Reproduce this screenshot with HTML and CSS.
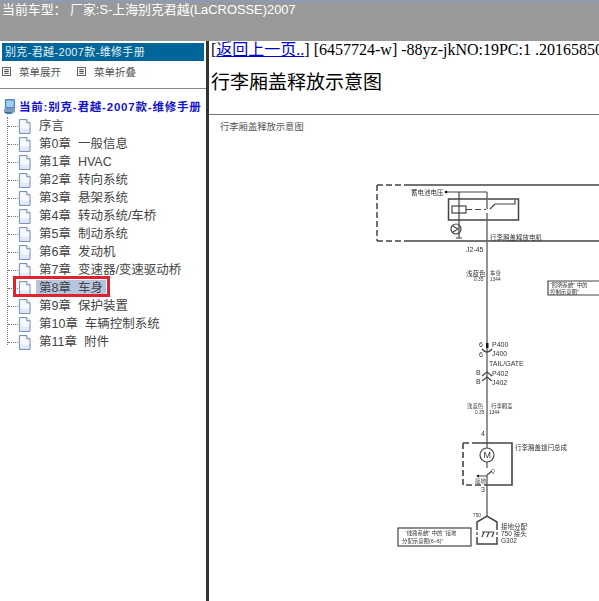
FILE: index.html
```html
<!DOCTYPE html>
<html lang="zh-CN">
<head>
    <meta charset="UTF-8">
    <meta name="viewport" content="width=device-width, initial-scale=1.0">
    <title>行李厢盖释放示意图</title>
    <link rel="stylesheet" href="styles.css">
</head>
<body>
    <svg class="defs" width="0" height="0">
        <symbol id="page" viewBox="0 0 14 16">
            <path d="M1.500 .5h8l3.500 3.500v11.500h-11.500z" fill="#dfe9f7" stroke="#6f86a8"/>
            <path d="M2.500 1.500h6v3h3.500v5c-3 2-6 1-9.500 0z" fill="#f6f9fd"/>
            <path d="M9.500 .5v3.500h3.500" fill="#fff" stroke="#6f86a8"/>
        </symbol>
        <symbol id="menu" viewBox="0 0 10 10">
            <rect x=".5" y=".5" width="9" height="9" fill="#fff" stroke="#555"/>
            <path d="M2.500 3h5M2.500 5h5M2.500 7h5" stroke="#333"/>
        </symbol>
    </svg>

    <header class="topbar">当前车型： 厂家:S-上海别克君越(LaCROSSE)2007</header>

    <div class="frames">
        <nav class="sidebar">
            <div class="side-title">别克-君越-2007款-维修手册</div>
            <div class="side-menu">
                <span class="side-btn"><svg class="menu-icon"><use href="#menu"/></svg>菜单展开</span>
                <span class="side-btn"><svg class="menu-icon"><use href="#menu"/></svg>菜单折叠</span>
            </div>
            <div class="tree-root">
                <svg class="root-icon" viewBox="0 0 14 16">
                    <rect x="2" y="0" width="11" height="11" rx="1.500" fill="#4f86c6"/>
                    <rect x="3.500" y="1.500" width="8" height="7" fill="#a9cdf0"/>
                    <path d="M1 11l3-1h7l2 1v3l-4 2H4l-3-2z" fill="#7f9dbf"/>
                    <path d="M1 14l3 2h5v-2z" fill="#3f6fa6"/>
                </svg>
                当前:别克-君越-2007款-维修手册
            </div>
            <ul class="tree">
                <li class="tree-row"><svg class="page-icon"><use href="#page"/></svg><span class="tree-label">序言</span></li>
                <li class="tree-row"><svg class="page-icon"><use href="#page"/></svg><span class="tree-label">第0章&nbsp;&nbsp;一般信息</span></li>
                <li class="tree-row"><svg class="page-icon"><use href="#page"/></svg><span class="tree-label">第1章&nbsp;&nbsp;HVAC</span></li>
                <li class="tree-row"><svg class="page-icon"><use href="#page"/></svg><span class="tree-label">第2章&nbsp;&nbsp;转向系统</span></li>
                <li class="tree-row"><svg class="page-icon"><use href="#page"/></svg><span class="tree-label">第3章&nbsp;&nbsp;悬架系统</span></li>
                <li class="tree-row"><svg class="page-icon"><use href="#page"/></svg><span class="tree-label">第4章&nbsp;&nbsp;转动系统/车桥</span></li>
                <li class="tree-row"><svg class="page-icon"><use href="#page"/></svg><span class="tree-label">第5章&nbsp;&nbsp;制动系统</span></li>
                <li class="tree-row"><svg class="page-icon"><use href="#page"/></svg><span class="tree-label">第6章&nbsp;&nbsp;发动机</span></li>
                <li class="tree-row"><svg class="page-icon"><use href="#page"/></svg><span class="tree-label">第7章&nbsp;&nbsp;变速器/变速驱动桥</span></li>
                <li class="tree-row current"><svg class="page-icon"><use href="#page"/></svg><span class="tree-label">第8章&nbsp;&nbsp;车身</span><span class="red-box"></span></li>
                <li class="tree-row"><svg class="page-icon"><use href="#page"/></svg><span class="tree-label">第9章&nbsp;&nbsp;保护装置</span></li>
                <li class="tree-row"><svg class="page-icon"><use href="#page"/></svg><span class="tree-label">第10章&nbsp;&nbsp;车辆控制系统</span></li>
                <li class="tree-row"><svg class="page-icon"><use href="#page"/></svg><span class="tree-label">第11章&nbsp;&nbsp;附件</span></li>
            </ul>
        </nav>

        <main class="content">
            <div class="crumb">[<a href="#">返回上一页..</a>] [6457724-w] -88yz-jkNO:19PC:1 .20165850</div>
            <h1 class="doc-title">行李厢盖释放示意图</h1>
            <div class="figure">
                <div class="figure-title">行李厢盖释放示意图</div>
                <svg class="diagram" viewBox="209 145 390 456">
                    <g fill="none" stroke="#444" stroke-width="1.200">
                        <!-- upper module -->
                        <path d="M377 185h27M377 241h27M377 185v56" stroke-dasharray="6 3" stroke-width="1.500"/>
                        <path d="M404 185h195M404 241h195" stroke-width="1.700"/>
                        <path d="M447 192h40M459 192v46"/>
                        <rect x="448.500" y="199" width="70" height="21" stroke-width="1.500"/>
                        <rect x="452" y="206" width="14" height="7"/>
                        <path d="M466 209.500h20" stroke-dasharray="6 3"/>
                        <path d="M490 209l5-5h20v-4"/>
                        <circle cx="456" cy="229" r="5"/>
                        <path d="M453 226l5 3-5 3M456 238h6"/>
                        <!-- main wire -->
                        <path d="M487 192v17M487 213v235M487 462v6M487 475v41" stroke="#666" stroke-width="1.400"/>
                        <path d="M482 349q5 6 10 0" stroke-width="1.500"/>
                        <path d="M482 376l5-4 5 4M482 381l5-4 5 4"/>
                        <!-- lock -->
                        <path d="M475 443h37v42h-22" stroke-width="1.600"/>
                        <path d="M463 443h12M463 443v42h27" stroke-dasharray="6 3" stroke-width="1.600"/>
                        <circle cx="487" cy="455" r="7"/>
                        <path d="M487 475l5-4M478 476h9"/>
                        <!-- ground splice -->
                        <path d="M477 530v-8l10-6 10 6v8M477 537v7h20v-7" stroke-width="1.500"/>
                        <path d="M482 532h12M484 532l-2 5M489 532l-2 5M494 532l-2 5M477 532v3M497 532v3"/>
                        <!-- note boxes -->
                        <path d="M599 281h-51v14h51"/>
                        <rect x="398" y="528" width="73" height="18"/>
                    </g>
                    <circle cx="446" cy="192" r="1.300" fill="#111"/>
                    <rect x="486" y="343" width="2.500" height="5" fill="#111"/>
                    <path d="M476 476l3-1.500v3z" fill="#111"/>
                    <g class="d-text">
                        <text x="411" y="195" class="d-mid">蓄电池电压</text>
                        <text x="490" y="240" class="d-mid">行李厢盖释放电机</text>
                        <text x="466" y="252">J2-45</text>
                        <text x="466" y="276" class="d-mid">浅蓝色</text>
                        <text x="474" y="281" class="d-tiny">0.35</text>
                        <text x="490" y="275" class="d-small">车身</text>
                        <text x="490" y="281" class="d-tiny">1344</text>
                        <text x="550" y="287" class="d-small">“照明系统” 中的</text>
                        <text x="550" y="294" class="d-small">控制示意图”</text>
                        <text x="479" y="347">6</text>
                        <text x="479" y="357">6</text>
                        <text x="492" y="347">P400</text>
                        <text x="492" y="356">J400</text>
                        <text x="489" y="366">TAIL/GATE</text>
                        <text x="476" y="375">B</text>
                        <text x="476" y="384">B</text>
                        <text x="492" y="376">P402</text>
                        <text x="492" y="385">J402</text>
                        <text x="467" y="408" class="d-small">浅蓝色</text>
                        <text x="475" y="414" class="d-tiny">0.35</text>
                        <text x="491" y="408" class="d-small">行李厢盖</text>
                        <text x="489" y="414" class="d-tiny">1344</text>
                        <text x="481" y="436">4</text>
                        <text x="515" y="450" class="d-mid">行李厢盖锁闩总成</text>
                        <text x="483.500" y="458" class="d-m">M</text>
                        <text x="491" y="473" class="d-tiny">Q</text>
                        <text x="475" y="483" class="d-small">接地</text>
                        <text x="481" y="492">3</text>
                        <text x="473" y="517" class="d-tiny">750</text>
                        <text x="501" y="529" class="d-mid">接地分配</text>
                        <text x="501" y="536" class="d-mid">750 接头</text>
                        <text x="501" y="543" class="d-mid">G302</text>
                        <text x="405" y="535" class="d-small">“线路系统” 中的 “接地</text>
                        <text x="402" y="543" class="d-small">分配示意图(6–6)”</text>
                    </g>
                </svg>
            </div>
        </main>
    </div>
</body>
</html>
```

FILE: styles.css
```css
* {
    box-sizing: border-box;
}
html, body {
    height: 100%;
}
body {
    margin: 0;
    display: flex;
    flex-direction: column;
    overflow: hidden;
    background: #fff;
    font-family: "Liberation Sans", "Noto Sans CJK SC", sans-serif;
}
.defs {
    position: absolute;
}
.topbar {
    flex: 0 0 41px;
    padding: 0 0 0 2px;
    background: #999;
    border-top: 2px solid #8c9bb8;
    color: #fff;
    font-size: 12.900px;
    line-height: 16px;
    white-space: nowrap;
}
.frames {
    flex: 1;
    display: flex;
    min-height: 0;
}

/* left menu */
.sidebar {
    flex: 0 0 209px;
    padding: 2px 0 0;
    border-right: 3px solid #333;
}
.side-title {
    height: 18px;
    margin: 0 2px;
    padding-left: 3px;
    background: #006699;
    color: #e8f0f5;
    font-size: 11px;
    letter-spacing: .35px;
    line-height: 18px;
}
.side-menu {
    display: flex;
    gap: 16px;
    height: 28px;
    padding: 5px 0 0 2px;
    border-bottom: 1px solid #888;
    color: #555;
    font-size: 10.500px;
    line-height: 12px;
}
.side-btn {
    display: flex;
    gap: 8px;
}
.menu-icon {
    width: 9px;
    height: 9px;
    margin-top: 1px;
}
.tree-root {
    display: flex;
    align-items: center;
    gap: 3px;
    height: 16px;
    margin-top: 9px;
    padding-left: 3px;
    color: #1414c8;
    font-size: 11.500px;
    font-weight: bold;
    letter-spacing: .8px;
    white-space: nowrap;
}
.root-icon {
    flex: none;
    width: 13px;
    height: 15px;
}
.tree {
    position: relative;
    margin: 3px 0 0 7px;
    padding: 0;
    list-style: none;
    border-left: 1px dotted #777;
    height: 228px;
}
.tree-row {
    position: relative;
    display: flex;
    align-items: center;
    gap: 8px;
    height: 18px;
    padding-left: 10px;
    color: #444;
    font-size: 12.500px;
    white-space: nowrap;
}
.tree-row::before {
    content: "";
    position: absolute;
    left: 0;
    top: 9px;
    width: 10px;
    border-top: 1px dotted #777;
}
.page-icon {
    flex: none;
    width: 13px;
    height: 15px;
}
.tree-label {
    line-height: 16px;
}
.current .tree-label {
    margin-left: -3px;
    padding: 0 3px;
    background: #b6c5df;
}
.red-box {
    position: absolute;
    left: 5px;
    top: -3px;
    width: 97px;
    height: 21px;
    border: 3px solid #e2232e;
}

/* right document */
.content {
    flex: 1;
    min-width: 0;
    overflow: hidden;
}
.crumb {
    padding-left: 2px;
    height: 18px;
    font-family: "Liberation Serif", "Noto Sans CJK SC", serif;
    font-size: 16px;
    line-height: 18px;
    white-space: nowrap;
}
.crumb a {
    color: #00c;
}
.doc-title {
    height: 56px;
    margin: 0;
    padding: 10px 0 0 2px;
    border-bottom: 1px solid #777;
    font-size: 19px;
    font-weight: normal;
    line-height: 27px;
}
.figure-title {
    height: 30px;
    padding: 5px 0 0 11px;
    color: #555;
    font-size: 9.300px;
    line-height: 14px;
}
.diagram {
    display: block;
    width: 390px;
    height: 456px;
    filter: blur(.3px);
}
.d-text {
    fill: #333;
    font-family: "Liberation Sans", "Noto Sans CJK SC", sans-serif;
    font-size: 7px;
}
.d-mid {
    font-size: 6.500px;
}
.d-small {
    font-size: 5.400px;
}
.d-tiny {
    font-size: 4.800px;
}
.d-m {
    font-size: 9px;
}
```
